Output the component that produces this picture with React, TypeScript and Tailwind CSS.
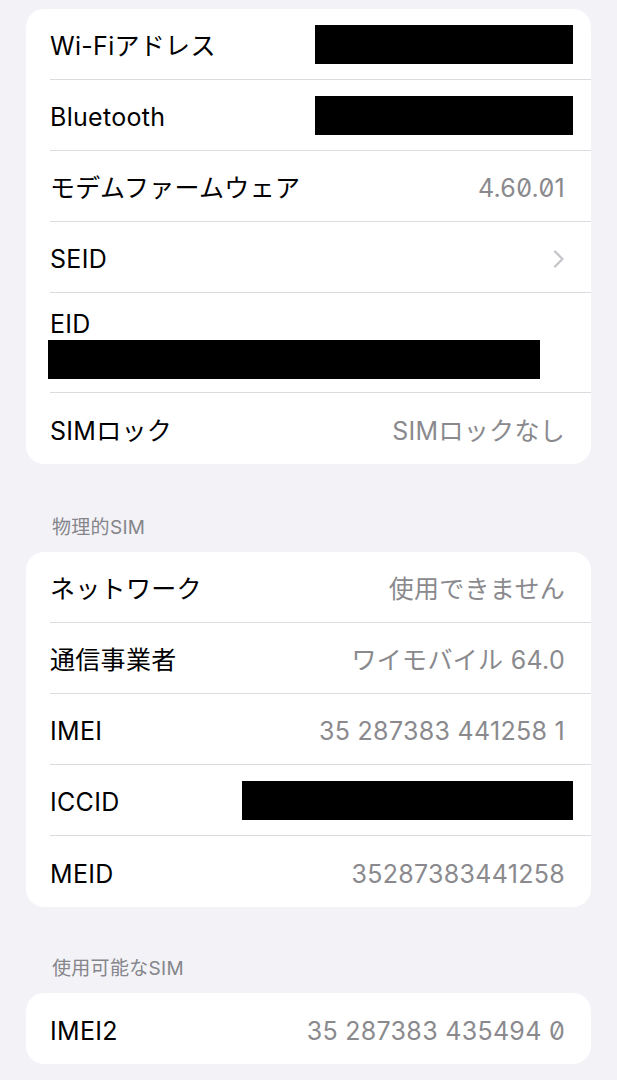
import React from "react";

const FONT = { fontFamily: 'Inter, "Noto Sans CJK JP", sans-serif' };

function Redact({ w, shift = 0 }: { w: number; shift?: number }) {
  return <div className="h-[39px] bg-black" style={{ width: w, marginRight: shift }} />;
}

function Row({
  label,
  value,
  last,
  children,
  slashed,
}: {
  label: string;
  value?: string;
  last?: boolean;
  children?: React.ReactNode;
  slashed?: boolean;
}) {
  return (
    <div className="pl-[24px]">
      <div
        className={
          "flex h-[71px] items-center justify-between pr-[26px] " +
          (last ? "" : "border-b border-[#dcdce0]")
        }
      >
        <span className="pt-[4px] text-[25px] leading-[30px] tracking-[0.3px] text-black">{label}</span>
        {value !== undefined && (
          <span
            className={
              "pt-[4px] text-[25px] leading-[30px] tracking-[0.3px] text-[#8a8a8e] " +
              (slashed ? "slashed-zero" : "")
            }
          >
            {value}
          </span>
        )}
        {children}
      </div>
    </div>
  );
}

function Header({ text, top }: { text: string; top: string }) {
  return (
    <div className={top + " mb-[12px] h-[24px] pl-[26px] text-[19px] leading-[24px] tracking-[0.3px] text-[#85858a]"}>
      {text}
    </div>
  );
}

export default function App() {
  return (
    <div className="min-h-screen bg-[#f2f2f7] px-[26px] pt-[9px]" style={FONT}>
      <div className="overflow-hidden rounded-[18px] bg-white">
        <Row label="Wi-Fiアドレス">
          <Redact w={258} shift={-8} />
        </Row>
        <Row label="Bluetooth">
          <Redact w={258} shift={-8} />
        </Row>
        <Row label="モデムファームウェア" value="4.60.01" slashed />
        <Row label="SEID">
          <svg width="12" height="18" viewBox="0 0 12 18" className="mt-[3px]">
            <path
              d="M2 1.5 L9.5 9 L2 16.5"
              fill="none"
              stroke="#c4c4c8"
              strokeWidth="2.2"
              strokeLinecap="round"
              strokeLinejoin="round"
            />
          </svg>
        </Row>
        <div className="pl-[24px]">
          <div className="h-[100px] border-b border-[#dcdce0] pt-[16px]">
            <div className="text-[25px] leading-[30px] tracking-[0.3px] text-black">EID</div>
            <div className="ml-[-2px] mt-[1px] h-[39px] w-[492px] bg-black" />
          </div>
        </div>
        <Row label="SIMロック" value="SIMロックなし" last />
      </div>

      <Header text="物理的SIM" top="mt-[52px]" />
      <div className="overflow-hidden rounded-[18px] bg-white">
        <Row label="ネットワーク" value="使用できません" />
        <Row label="通信事業者" value="ワイモバイル 64.0" />
        <Row label="IMEI" value="35 287383 441258 1" />
        <Row label="ICCID">
          <Redact w={331} shift={-8} />
        </Row>
        <Row label="MEID" value="35287383441258" last />
      </div>

      <Header text="使用可能なSIM" top="mt-[50px]" />
      <div className="overflow-hidden rounded-[18px] bg-white">
        <Row label="IMEI2" value="35 287383 435494 0" last slashed />
      </div>
    </div>
  );
}
